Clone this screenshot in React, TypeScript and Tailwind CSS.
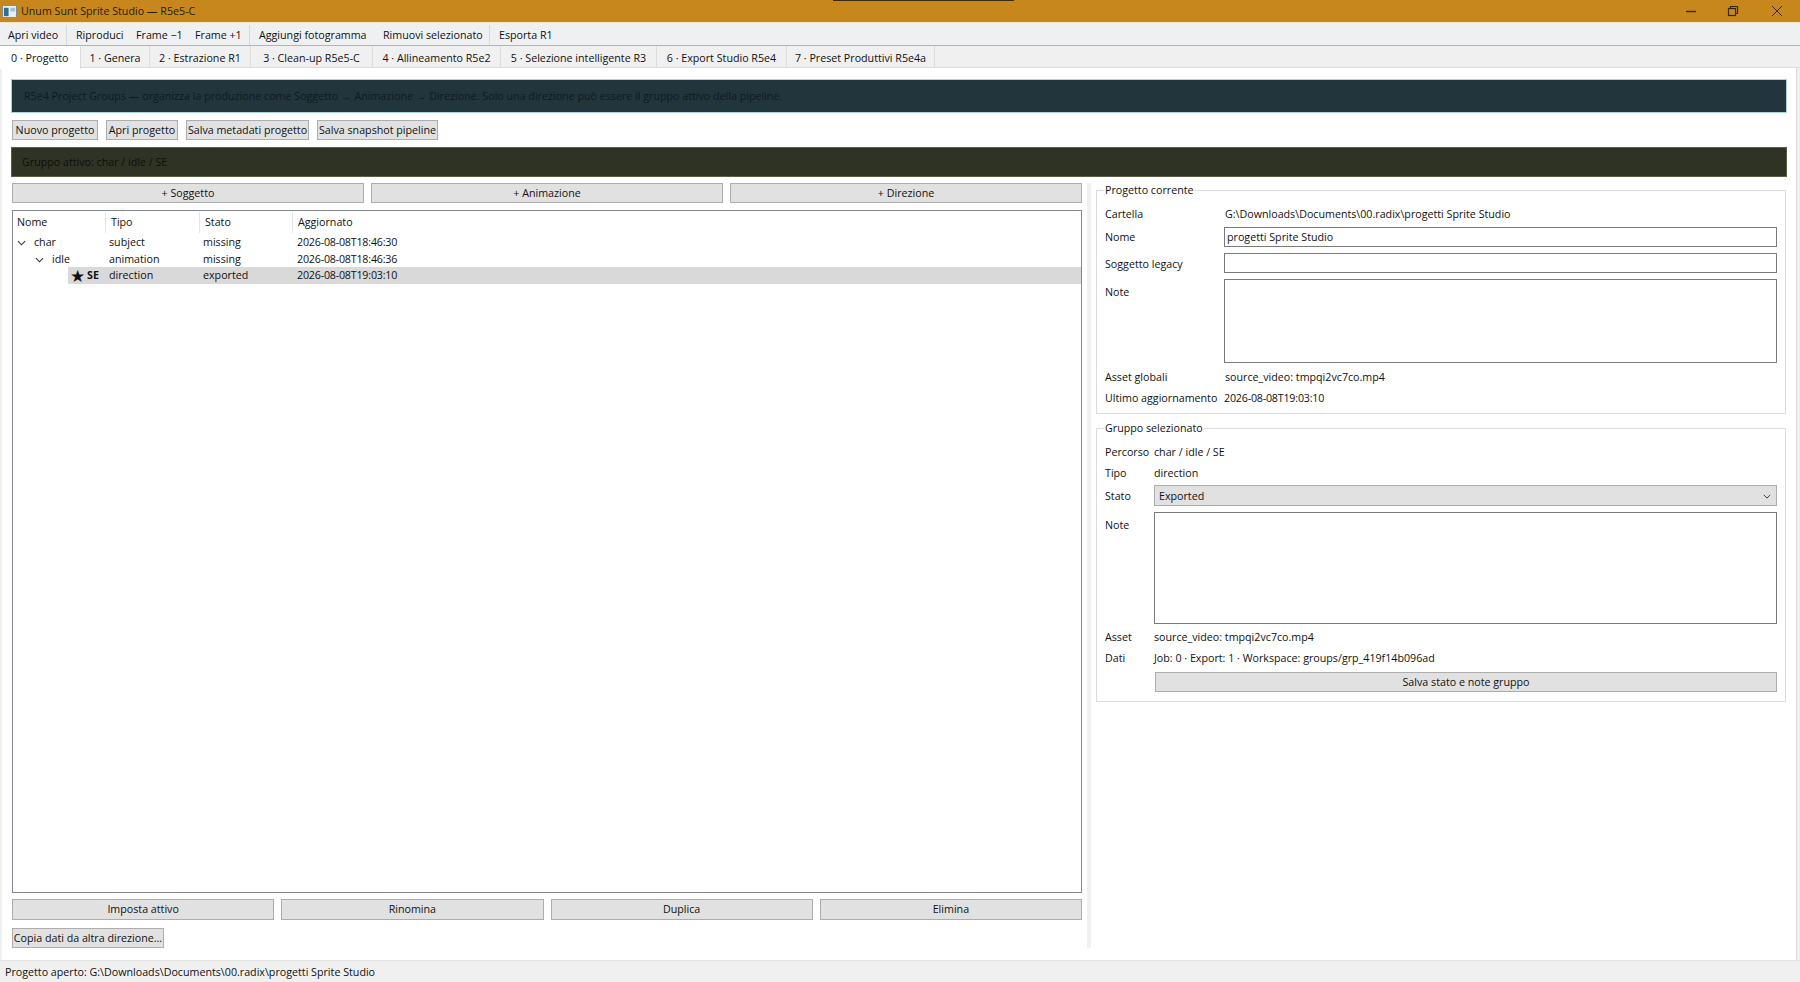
import type { ReactNode } from 'react';

const FONT = "font-['Open_Sans',sans-serif]";

// Windows-style push button, sizes come from the caller
function Btn({ className, children }: { className: string; children: ReactNode }) {
  return (
    <button className={`flex items-center justify-center bg-[#e1e1e1] border border-[#adadad] text-[#111] leading-none whitespace-nowrap ${className}`}>
      {children}
    </button>
  );
}

function Group({ title, className, children }: { title: string; className: string; children: ReactNode }) {
  return (
    <fieldset className={`border border-[#dcdcdc] pl-2 pr-2 min-w-0 ${className}`}>
      <legend className="-ml-[1px] px-[1px] h-[14px] leading-[14px] text-[#111]">{title}</legend>
      {children}
    </fieldset>
  );
}

function Field({ className }: { className: string }) {
  return <div className={`bg-white border border-[#7a7a7a] ${className}`} />;
}

const MENU: { label: string; cls: string; sep?: boolean }[] = [
  { label: 'Apri video', cls: 'w-[59px]', sep: true },
  { label: 'Riproduci', cls: 'w-[60px]' },
  { label: 'Frame −1', cls: 'w-[59px]' },
  { label: 'Frame +1', cls: 'w-[55px]', sep: true },
  { label: 'Aggiungi fotogramma', cls: 'w-[124px]' },
  { label: 'Rimuovi selezionato', cls: 'w-[107px]', sep: true },
  { label: 'Esporta R1', cls: 'w-[60px]' },
];

const TABS = [
  { label: '1 · Genera', cls: 'w-[69px]' },
  { label: '2 · Estrazione R1', cls: 'w-[101px]' },
  { label: '3 · Clean-up R5e5-C', cls: 'w-[122px]' },
  { label: '4 · Allineamento R5e2', cls: 'w-[128px]' },
  { label: '5 · Selezione intelligente R3', cls: 'w-[156px]' },
  { label: '6 · Export Studio R5e4', cls: 'w-[130px]' },
  { label: '7 · Preset Produttivi R5e4a', cls: 'w-[148px]' },
];

const ROWS = [
  { indent: 'w-[16px]', name: 'char', tipo: 'subject', stato: 'missing', data: '2026-08-08T18:46:30' },
  { indent: 'w-[34px]', name: 'idle', tipo: 'animation', stato: 'missing', data: '2026-08-08T18:46:36' },
];

function Chevron({ className }: { className: string }) {
  return (
    <svg viewBox="0 0 10 6" className={className} fill="none" stroke="#333" strokeWidth="1.2">
      <path d="M1 1l4 4 4-4" />
    </svg>
  );
}

export default function App() {
  return (
    <div className={`${FONT} w-[1800px] h-[982px] flex flex-col bg-[#f0f0f0] text-[10.7px] text-[#111] overflow-hidden`}>
      {/* title bar */}
      <div className="relative h-[22px] shrink-0 bg-[#c8871c] flex items-center">
        <div className="absolute left-[833px] top-0 w-[181px] h-[1px] bg-[#3a2a12]" />
        <svg viewBox="0 0 16 14" className="ml-[2px] w-[15px] h-[13px]">
          <rect x="0.5" y="0.5" width="15" height="13" fill="#e8eef2" stroke="#7b8a94" />
          <rect x="2" y="3" width="5" height="9" fill="#2f6f8f" />
          <rect x="9" y="3" width="5" height="4" fill="#9fc2d6" />
        </svg>
        <span className="ml-[4px] text-[#2a1c05]">Unum Sunt Sprite Studio — R5e5-C</span>
        <div className="ml-auto flex items-center">
          <svg viewBox="0 0 12 12" className="w-[12px] h-[12px] mr-[30px]" stroke="#3a2608" strokeWidth="1.4" fill="none"><path d="M1 6.5h10" /></svg>
          <svg viewBox="0 0 12 12" className="w-[12px] h-[12px] mr-[32px]" stroke="#3a2608" strokeWidth="1.2" fill="none"><rect x="1.5" y="3.5" width="7" height="7" /><path d="M3.5 3.5v-2h7v7h-2" /></svg>
          <svg viewBox="0 0 12 12" className="w-[12px] h-[12px] mr-[17px]" stroke="#3a2608" fill="none"><path d="M1 1l10 10M11 1L1 11" /></svg>
        </div>
      </div>

      {/* menu toolbar */}
      <div className="h-[24px] shrink-0 flex items-center pl-[8px] pt-[2px] bg-[#eff0f1] border-t border-[#f3e3c4] border-b border-b-[#b4b4b4]">
        {MENU.map((m) => (
          <div key={m.label} className={`${m.cls} shrink-0 h-[20px] flex items-center whitespace-nowrap ${m.sep ? 'border-r border-[#d9d9d9] mr-[9px]' : ''}`}>
            {m.label}
          </div>
        ))}
      </div>

      {/* tab strip */}
      <div className="h-[22px] shrink-0 flex items-stretch">
        <div className="w-[81px] shrink-0 -mb-[1px] z-10 bg-white border-r border-[#dcdcdc] pl-[11px] pt-[3px] leading-[18px]">0 · Progetto</div>
        {TABS.map((t) => (
          <div key={t.label} className={`${t.cls} shrink-0 flex items-center justify-center pt-[4px] whitespace-nowrap border-r border-b border-[#dcdcdc] bg-[#f0f0f0]`}>
            {t.label}
          </div>
        ))}
        <div className="flex-1 border-b border-[#dcdcdc]" />
      </div>

      {/* tab page */}
      <div className="h-[892px] shrink-0 ml-[2px] mr-[3px] bg-white border-r border-[#dcdcdc] pl-[10px] pr-[10px] pt-[11px] flex flex-col">
        <div className="h-[34px] shrink-0 -mx-[1px] flex items-center pl-[12px] bg-[#22353d] border border-[#a9d2dc] text-[#0e1a1f]">
          R5e4 Project Groups — organizza la produzione come Soggetto → Animazione → Direzione. Solo una direzione può essere il gruppo attivo della pipeline.
        </div>
        <div className="mt-[7px] h-[20px] shrink-0 flex gap-[8px]">
          <Btn className="w-[86px]">Nuovo progetto</Btn>
          <Btn className="w-[72px]">Apri progetto</Btn>
          <Btn className="w-[123px]">Salva metadati progetto</Btn>
          <Btn className="w-[121px]">Salva snapshot pipeline</Btn>
        </div>
        <div className="mt-[7px] h-[30px] shrink-0 -mx-[1px] flex items-center pl-[10px] bg-[#2f3324] border border-[#5c5e48] text-[#0d0f08]">
          Gruppo attivo: char / idle / SE
        </div>

        <div className="mt-[6px] flex-1 flex min-h-0">
          {/* left column */}
          <div className="w-[1070px] shrink-0 flex flex-col">
            <div className="h-[20px] shrink-0 flex gap-[7px]">
              <Btn className="flex-1">+ Soggetto</Btn>
              <Btn className="flex-1">+ Animazione</Btn>
              <Btn className="flex-1">+ Direzione</Btn>
            </div>
            <div className="mt-[7px] h-[683px] shrink-0 bg-white border border-[#828790] flex flex-col">
              <div className="h-[21px] mt-[1px] shrink-0 flex items-center">
                <div className="w-[93px] pl-[4px] h-full flex items-center border-r border-[#e5e5e5]">Nome</div>
                <div className="w-[94px] pl-[5px] h-full flex items-center border-r border-[#e5e5e5]">Tipo</div>
                <div className="w-[93px] pl-[5px] h-full flex items-center border-r border-[#e5e5e5]">Stato</div>
                <div className="pl-[5px]">Aggiornato</div>
              </div>
              {ROWS.map((r) => (
                <div key={r.name} className="h-[17px] shrink-0 flex items-center pt-[2px]">
                  <div className="w-[96px] flex items-center">
                    <div className={`${r.indent} shrink-0 flex justify-end pr-[3px]`}>
                      <Chevron className="w-[9px] h-[6px]" />
                    </div>
                    <span className="ml-[5px]">{r.name}</span>
                  </div>
                  <div className="w-[94px]">{r.tipo}</div>
                  <div className="w-[94px]">{r.stato}</div>
                  <div className="tracking-[-0.2px]">{r.data}</div>
                </div>
              ))}
              <div className="h-[17px] shrink-0 flex items-center">
                <div className="w-[55px] shrink-0" />
                <div className="flex-1 h-full flex items-center bg-[#d9d9d9]">
                  <div className="w-[41px] flex items-center pl-[2px]">
                    <span className="text-[17px] leading-none">★</span>
                    <span className="ml-[2px] font-bold">SE</span>
                  </div>
                  <div className="w-[94px]">direction</div>
                  <div className="w-[94px]">exported</div>
                  <div className="tracking-[-0.2px]">2026-08-08T19:03:10</div>
                </div>
              </div>
            </div>
            <div className="mt-[6px] h-[21px] shrink-0 flex gap-[7px]">
              <Btn className="flex-1">Imposta attivo</Btn>
              <Btn className="flex-1">Rinomina</Btn>
              <Btn className="flex-1">Duplica</Btn>
              <Btn className="flex-1">Elimina</Btn>
            </div>
            <Btn className="mt-[8px] h-[20px] w-[152px] shrink-0">Copia dati da altra direzione...</Btn>
          </div>

          {/* splitter */}
          <div className="ml-[5px] w-[4px] h-[765px] shrink-0 bg-[#f0f0f0]" />

          {/* right column */}
          <div className="ml-[5px] w-[690px] shrink-0 flex flex-col">
            <Group title="Progetto corrente" className="h-[231px] shrink-0">
              <div className="mt-[7px] grid grid-cols-[119px_1fr]">
                <div className="h-[20px] flex items-center">Cartella</div>
                <div className="h-[20px] pl-[1px] flex items-center">G:\Downloads\Documents\00.radix\progetti Sprite Studio</div>
                <div className="mt-[3px] h-[20px] pt-[1px] flex items-center">Nome</div>
                <div className="mt-[3px] h-[20px] pl-[2px] pt-[1px] flex items-center bg-white border border-[#7a7a7a]">progetti Sprite Studio</div>
                <div className="mt-[6px] h-[20px] pt-[2px] flex items-center">Soggetto legacy</div>
                <Field className="mt-[6px] h-[20px]" />
                <div className="mt-[6px] pt-[5px]">Note</div>
                <Field className="mt-[6px] h-[84px]" />
                <div className="mt-[4px] h-[20px] flex items-center">Asset globali</div>
                <div className="mt-[4px] h-[20px] pl-[1px] flex items-center">source_video: tmpqi2vc7co.mp4</div>
                <div className="mt-[1px] h-[20px] flex items-center whitespace-nowrap">Ultimo aggiornamento</div>
                <div className="mt-[1px] h-[20px] flex items-center tracking-[-0.2px]">2026-08-08T19:03:10</div>
              </div>
            </Group>
            <Group title="Gruppo selezionato" className="mt-[7px] h-[281px] shrink-0">
              <div className="mt-[7px] grid grid-cols-[49px_1fr]">
                <div className="h-[20px] flex items-center">Percorso</div>
                <div className="h-[20px] flex items-center">char / idle / SE</div>
                <div className="mt-[1px] h-[20px] flex items-center">Tipo</div>
                <div className="mt-[1px] h-[20px] flex items-center">direction</div>
                <div className="mt-[2px] h-[21px] pt-[1px] flex items-center">Stato</div>
                <div className="mt-[2px] h-[21px] flex items-center justify-between pl-[4px] pr-[5px] pt-[1px] bg-[#e1e1e1] border border-[#adadad]">
                  <span>Exported</span>
                  <Chevron className="w-[8px] h-[5px]" />
                </div>
                <div className="mt-[6px] pt-[5px]">Note</div>
                <Field className="mt-[6px] h-[112px]" />
                <div className="mt-[3px] h-[20px] flex items-center">Asset</div>
                <div className="mt-[3px] h-[20px] flex items-center">source_video: tmpqi2vc7co.mp4</div>
                <div className="mt-[1px] h-[20px] flex items-center">Dati</div>
                <div className="mt-[1px] h-[20px] flex items-center">Job: 0 · Export: 1 · Workspace: groups/grp_419f14b096ad</div>
                <div />
                <Btn className="mt-[4px] h-[20px] ml-[1px]">Salva stato e note gruppo</Btn>
              </div>
            </Group>
          </div>
        </div>
      </div>

      {/* status bar */}
      <div className="flex-1 flex items-center pl-[5px] pt-[2px] bg-[#f0f0f0] border-t border-[#e3e3e3]">
        Progetto aperto: G:\Downloads\Documents\00.radix\progetti Sprite Studio
      </div>
    </div>
  );
}
